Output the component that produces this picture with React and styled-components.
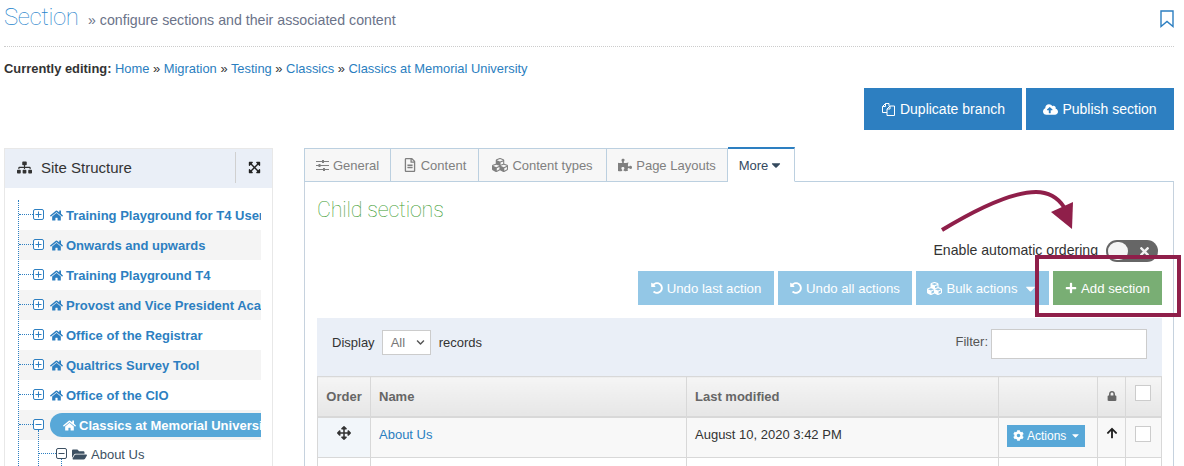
import React from "react";
import styled, { createGlobalStyle } from "styled-components";
import {
  FaSitemap, FaExpandArrowsAlt, FaHome, FaFolderOpen, FaCubes, FaPuzzlePiece, FaCog, FaArrowUp,
  FaLock, FaArrowsAlt, FaPlus, FaCloudUploadAlt, FaUndoAlt, FaRegFileAlt,
  FaCaretDown, FaTimes, FaChevronDown,
} from "react-icons/fa";

const Global = createGlobalStyle`
  html, body { margin: 0; padding: 0; background: #fff; height: 466px; overflow: hidden; }
  body { font-family: "Liberation Sans", Arial, sans-serif; font-size: 13px; color: #333; }
  * { box-sizing: border-box; }
`;

const Page = styled.div`
  position: relative;
  width: 1184px;
  height: 466px;
  overflow: hidden;
  padding: 0 10px 0 4px;
`;
const Header = styled.header`
  display: flex;
  align-items: baseline;
  height: 47px;
  padding-top: 1px;
  border-bottom: 1px dotted #ccc;
`;
const Title = styled.h1`
  margin: 0;
  font: 100 24px/32px Roboto, sans-serif;
  letter-spacing: -0.4px;
  color: #1f84cc;
  width: 84px;
`;
const Subtitle = styled.span`
  font-size: 14.2px;
  color: #6b7389;
`;
const Bookmark = styled.svg`
  margin-left: auto;
  align-self: flex-start;
  margin-top: 9px;
  width: 14px;
  height: 18px;
  color: #2d7fc1;
`;
const Crumbs = styled.div`
  margin-top: 14px;
  height: 15px;
  line-height: 15px;
  font-size: 12.9px;
  white-space: nowrap;
  b { color: #333; }
`;
const A = styled.a`
  color: #2a7ec0;
  text-decoration: none;
`;
const BranchBar = styled.div`
  display: flex;
  justify-content: flex-end;
  gap: 4px;
  margin-top: 12px;
`;
const BigButton = styled.button`
  display: inline-flex;
  align-items: center;
  justify-content: center;
  gap: 4px;
  height: 42px;
  width: ${(p) => p.$w}px;
  border: 0;
  background: #2d7fc1;
  color: #fff;
  font: 14px "Liberation Sans", sans-serif;
  svg { font-size: 15px; flex: none; }
`;
const Columns = styled.div`
  display: grid;
  grid-template-columns: 269px 1fr;
  column-gap: 31px;
  margin-top: 17px;
`;
const Sidebar = styled.aside`
  margin-top: 1px;
  border: 1px solid #e8e8e8;
  border-bottom: 0;
  height: 321px;
  overflow: hidden;
`;
const SideHead = styled.div`
  display: flex;
  align-items: center;
  height: 39px;
  padding: 0 0 2px 12px;
  background: #eaeff7;
  color: #333;
  font-size: 15px;
  gap: 9px;
  svg { font-size: 15px; }
`;
const ExpandCell = styled.div`
  margin-left: auto;
  width: 37px;
  height: 31px;
  border-left: 1px solid #d0d0d0;
  display: flex;
  align-items: center;
  justify-content: center;
  color: #222;
  padding-left: 1px;
  svg { font-size: 13px; }
`;
const Tree = styled.ul`
  list-style: none;
  margin: 12px 11px 0 13px;
  padding: 0;
  border-left: 1px dotted #2d7fc1;
`;
const Row = styled.li`
  display: flex;
  align-items: center;
  height: 30px;
  background: ${(p) => (p.$alt ? "#f4f4f4" : "#fff")};
  font-weight: bold;
  font-size: 13px;
  color: #2d7fc1;
  white-space: nowrap;
  overflow: hidden;
`;
const Connector = styled.span`
  flex: none;
  width: ${(p) => p.$w || 14}px;
  height: 0;
  margin-top: -2px;
  border-top: 1px dotted #2d7fc1;
`;
const Toggle = styled.svg`
  flex: none;
  width: 11px;
  height: 11px;
  margin-top: -2px;
  margin-right: 6px;
  color: ${(p) => p.$color || "#2d7fc1"};
`;
const HomeIcon = styled(FaHome)`
  flex: none;
  font-size: 13px;
  margin-right: 3px;
`;
const Pill = styled.span`
  display: flex;
  align-items: center;
  flex: none;
  width: 240px;
  height: 24px;
  padding-left: 13px;
  border-radius: 12px 0 0 12px;
  background: #58a8d8;
  color: #fff;
`;
const SubRow = styled.li`
  position: relative;
  display: flex;
  align-items: center;
  height: 28px;
  padding-left: 20px;
  font-size: 13px;
  color: #3d5062;
  white-space: nowrap;
  &::before {
    content: "";
    position: absolute;
    left: 19px;
    top: -10px;
    bottom: 0;
    border-left: 1px dotted #2d7fc1;
  }
  &::after {
    content: "";
    position: absolute;
    left: 42px;
    top: 19px;
    bottom: 0;
    border-left: 1px dotted #2d7fc1;
  }
`;
const Folder = styled(FaFolderOpen)`
  flex: none;
  font-size: 15px;
  margin-right: 4px;
  margin-left: -1px;
`;
const Main = styled.main`
  margin-right: 1px;
`;
const Tabs = styled.nav`
  display: flex;
  height: 35px;
  align-items: flex-end;
  margin-bottom: -1px;
  position: relative;
  z-index: 1;
`;
const Tab = styled.div`
  display: flex;
  align-items: center;
  justify-content: center;
  gap: 4px;
  width: ${(p) => p.$w}px;
  height: ${(p) => (p.$active ? 35 : 34)}px;
  font-size: 13px;
  color: ${(p) => (p.$active ? "#34495e" : "#808080")};
  background: ${(p) => (p.$active ? "#fff" : "#f7f7f7")};
  border: 1px solid #bcd0e0;
  border-left-width: ${(p) => (p.$first ? 1 : 0)}px;
  border-top: ${(p) => (p.$active ? "2px solid #2d7fc1" : "1px solid #bcd0e0")};
  border-bottom-color: ${(p) => (p.$active ? "#fff" : "#bcd0e0")};
  svg { font-size: ${(p) => p.$icon || 14}px; flex: none; }
`;
const Panel = styled.section`
  border: 1px solid #c6d2de;
  border-top-color: #bcd0e0;
  padding: 0 11px 0 12px;
  height: 300px;
`;
const PanelTitle = styled.h2`
  margin: 12px 0 0;
  font: 100 21.5px/32px Roboto, sans-serif;
  letter-spacing: -0.2px;
  color: #3c9c30;
`;
const OrderLine = styled.div`
  display: flex;
  justify-content: flex-end;
  align-items: center;
  gap: 8px;
  margin-top: 14px;
  margin-right: 4px;
  height: 22px;
  font-size: 14.1px;
  color: #333;
`;
const OrderText = styled.span`
  margin-top: -2px;
`;
const Switch = styled.span`
  display: flex;
  align-items: center;
  justify-content: space-between;
  width: 52px;
  height: 22px;
  padding: 0 7px 0 2px;
  border-radius: 11px;
  background: #666;
  color: #f2f2f2;
  font-size: 13px;
  &::before {
    content: "";
    width: 20px;
    height: 18px;
    border-radius: 9px;
    background: #f4f4f4;
  }
`;
const ActionBar = styled.div`
  display: flex;
  justify-content: flex-end;
  gap: 4px;
  margin-top: 9px;
`;
const ActionButton = styled.button`
  display: inline-flex;
  align-items: center;
  justify-content: center;
  gap: 4px;
  height: 34px;
  width: ${(p) => p.$w}px;
  border: 0;
  background: ${(p) => (p.$green ? "#79ae74" : "#93c7e6")};
  color: #fff;
  font: 13.2px "Liberation Sans", sans-serif;
  svg { font-size: ${(p) => p.$icon || 12}px; flex: none; }
`;
const Caret = styled(FaCaretDown)`
  margin-left: 1px;
`;
const Toolbar = styled.div`
  display: flex;
  justify-content: space-between;
  height: 58px;
  margin-top: 13px;
  padding: 11px 15px 0;
  background: #eaeff7;
`;
const DisplayGroup = styled.div`
  display: flex;
  align-items: center;
  gap: 8px;
  height: 26px;
  color: #333;
`;
const FakeSelect = styled.span`
  display: flex;
  align-items: center;
  justify-content: space-between;
  width: 49px;
  height: 25px;
  margin-left: -1px;
  padding: 0 5px 0 8px;
  background: #fff;
  border: 1px solid #ccc;
  color: #777;
  svg { font-size: 9px; color: #555; }
`;
const FilterInput = styled.input`
  width: 156px;
  height: 30px;
  border: 1px solid #ccc;
  background: #fff;
  margin-left: 3px;
`;
const FilterLabel = styled.label`
  display: flex;
  align-items: flex-start;
  line-height: 26px;
  color: #555;
`;
const Table = styled.table`
  width: 844px;
  table-layout: fixed;
  border-collapse: collapse;
  font-size: 13px;
`;
const Th = styled.th`
  height: 40px;
  padding: 0 8px ${(p) => p.$pb || 0}px;
  text-align: ${(p) => p.$align || "left"};
  color: #666;
  background: linear-gradient(#f5f5f5, #e6e6e6);
  border: 1px solid #d8d8d8;
  border-bottom-width: 2px;
  font-size: 13px;
`;
const Td = styled.td`
  height: 41px;
  padding: 0 8px 5px;
  text-align: ${(p) => p.$align || "left"};
  background: ${(p) => p.$bg || "#f8f8f8"};
  border: 1px solid #d8d8d8;
`;
const Check = styled.span`
  display: inline-block;
  vertical-align: middle;
  width: 16px;
  height: 16px;
  margin: 0 1px 2px 0;
  border: 1px solid #ccc;
  background: #fff;
`;
const MiniButton = styled.button`
  display: inline-flex;
  align-items: center;
  gap: 3px;
  width: 78px;
  height: 22px;
  margin-top: 2px;
  padding: 0 0 0 6px;
  border: 0;
  background: #58a8d8;
  color: #fff;
  font: 12px "Liberation Sans", sans-serif;
  svg { font-size: 11px; flex: none; }
`;
const MoveIcon = styled(FaArrowsAlt)`
  font-size: 14px;
  color: #333;
`;
const UpIcon = styled(FaArrowUp)`
  font-size: 12px;
  color: #222;
`;
const LockIcon = styled(FaLock)`
  font-size: 10px;
`;
const MoreCaret = styled(FaCaretDown)`
  margin-left: -3px;
`;
const Annotation = styled.svg`
  position: absolute;
  left: 0;
  top: 0;
  pointer-events: none;
`;

const PlusBox = ({ minus, color }) => (
  <Toggle viewBox="0 0 11 11" $color={color}>
    <rect x="0.5" y="0.5" width="10" height="10" rx="1.5" fill="#fff" stroke="currentColor" />
    <path d={minus ? "M2.5 5.5h6" : "M2.5 5.5h6M5.5 2.5v6"} stroke="currentColor" fill="none" />
  </Toggle>
);

const FilesIcon = () => (
  <svg width="15" height="15" viewBox="0 0 15 15" fill="none" stroke="currentColor" strokeWidth="1">
    <path d="M6 10.5H1.5V4.5L4.5 1.5H8V4" />
    <path d="M4.5 1.5V4.5H1.5" />
    <path d="M6 13.5V7L9 4H13.5V13.5Z" fill="#2d7fc1" />
    <path d="M9 4V7H6" />
  </svg>
);

const SlidersIcon = () => (
  <svg width="13" height="13" viewBox="0 0 13 13" fill="none" stroke="currentColor">
    <path d="M0 2.5H13M0 6.5H13M0 10.5H13" strokeWidth="1" />
    <path d="M7 1V4M3.5 5V8M8 9V12" strokeWidth="2" />
  </svg>
);

const sections = [
  "Training Playground for T4 Users",
  "Onwards and upwards",
  "Training Playground T4",
  "Provost and Vice President Academic",
  "Office of the Registrar",
  "Qualtrics Survey Tool",
  "Office of the CIO",
];

export default function App() {
  return (
    <Page>
      <Global />
      <Header>
        <Title>Section</Title>
        <Subtitle>» configure sections and their associated content</Subtitle>
        <Bookmark viewBox="0 0 14 18" fill="none" stroke="currentColor" strokeWidth="1.4">
          <path d="M1 1H13V16.5L7 11.5L1 16.5Z" />
        </Bookmark>
      </Header>
      <Crumbs>
        <b>Currently editing:</b> <A>Home</A> » <A>Migration</A> » <A>Testing</A> » <A>Classics</A> »{" "}
        <A>Classics at Memorial University</A>
      </Crumbs>
      <BranchBar>
        <BigButton $w={158}><FilesIcon /> Duplicate branch</BigButton>
        <BigButton $w={148}><FaCloudUploadAlt /> Publish section</BigButton>
      </BranchBar>
      <Columns>
        <Sidebar>
          <SideHead>
            <FaSitemap />
            Site Structure
            <ExpandCell><FaExpandArrowsAlt /></ExpandCell>
          </SideHead>
          <Tree>
            {sections.map((s, i) => (
              <Row key={s} $alt={i % 2 === 1}>
                <Connector />
                <PlusBox />
                <HomeIcon />
                {s}
              </Row>
            ))}
            <Row $alt>
              <Connector />
              <PlusBox minus />
              <Pill><HomeIcon />Classics at Memorial University</Pill>
            </Row>
            <SubRow>
              <Connector $w={17} />
              <PlusBox minus color="#3d5062" />
              <Folder />
              About Us
            </SubRow>
          </Tree>
        </Sidebar>
        <Main>
          <Tabs>
            <Tab $w={87} $first><SlidersIcon /> General</Tab>
            <Tab $w={88}><FaRegFileAlt /> Content</Tab>
            <Tab $w={128} $icon={16}><FaCubes /> Content types</Tab>
            <Tab $w={121}><FaPuzzlePiece /> Page Layouts</Tab>
            <Tab $w={67} $active>More <MoreCaret /></Tab>
          </Tabs>
          <Panel>
            <PanelTitle>Child sections</PanelTitle>
            <OrderLine>
              <OrderText>Enable automatic ordering</OrderText>
              <Switch><FaTimes /></Switch>
            </OrderLine>
            <ActionBar>
              <ActionButton $w={136}><FaUndoAlt /> Undo last action</ActionButton>
              <ActionButton $w={134}><FaUndoAlt /> Undo all actions</ActionButton>
              <ActionButton $w={133} $icon={15}><FaCubes /> Bulk actions <Caret /></ActionButton>
              <ActionButton $w={109} $green><FaPlus /> Add section</ActionButton>
            </ActionBar>
            <Toolbar>
              <DisplayGroup>
                Display
                <FakeSelect>All <FaChevronDown /></FakeSelect>
                records
              </DisplayGroup>
              <FilterLabel>Filter:<FilterInput /></FilterLabel>
            </Toolbar>
            <Table>
              <colgroup>
                <col width="53" />
                <col width="316" />
                <col width="312" />
                <col width="99" />
                <col width="28" />
                <col width="36" />
              </colgroup>
              <thead>
                <tr>
                  <Th $align="center">Order</Th>
                  <Th>Name</Th>
                  <Th>Last modified</Th>
                  <Th />
                  <Th $align="center"><LockIcon /></Th>
                  <Th $align="center" $pb={4}><Check /></Th>
                </tr>
              </thead>
              <tbody>
                <tr>
                  <Td $align="center" $bg="#f2f6fa"><MoveIcon /></Td>
                  <Td><A>About Us</A></Td>
                  <Td>August 10, 2020 3:42 PM</Td>
                  <Td><MiniButton><FaCog /> Actions <Caret /></MiniButton></Td>
                  <Td $align="center"><UpIcon /></Td>
                  <Td $align="center"><Check /></Td>
                </tr>
                <tr>
                  <Td $bg="#fff" />
                  <Td $bg="#fff" />
                  <Td $bg="#fff" />
                  <Td $bg="#fff" />
                  <Td $bg="#fff" />
                  <Td $bg="#fff" />
                </tr>
              </tbody>
            </Table>
          </Panel>
        </Main>
      </Columns>
      <Annotation width="1184" height="466" viewBox="0 0 1184 466">
        <rect x="1037" y="257" width="142" height="58" fill="none" stroke="#8f1f4a" strokeWidth="4" />
        <path d="M942 230 C975 210 1010 192 1036 192 C1050 192 1058 198 1064 207" fill="none" stroke="#8f1f4a" strokeWidth="4" />
        <path d="M1073 202 L1072 229 L1051 212 Z" fill="#8f1f4a" />
      </Annotation>
    </Page>
  );
}
